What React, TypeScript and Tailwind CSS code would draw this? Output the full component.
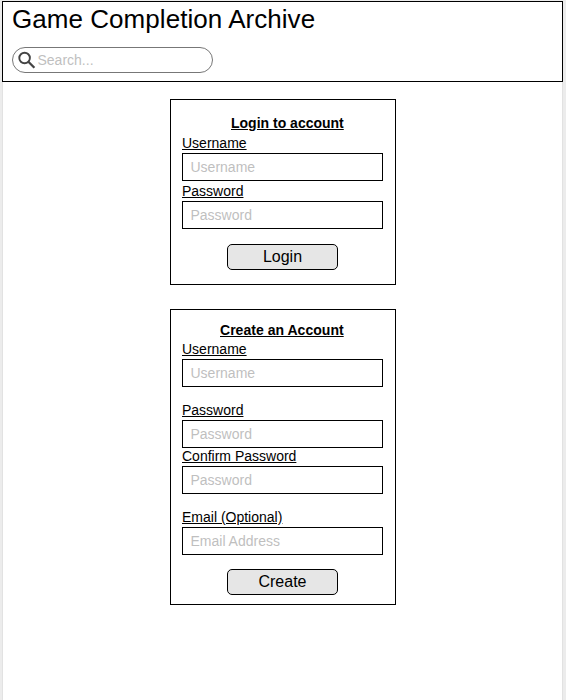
type FieldProps = { label: string; placeholder: string; className?: string };

function Field({ label, placeholder, className = "" }: FieldProps) {
  return (
    <label className={`block ${className}`}>
      <span className="block h-5 text-sm leading-5 underline">{label}</span>
      <input
        placeholder={placeholder}
        className="block h-7 w-[201px] border border-black bg-white px-[7.5px] text-sm outline-none placeholder:text-[#bfbfbf]"
      />
    </label>
  );
}

function SubmitButton({ text, className }: { text: string; className: string }) {
  return (
    <button
      type="button"
      className={`ml-[45px] block h-[26px] w-[111px] rounded-[5px] border border-black bg-[#e6e6e6] text-base leading-6 ${className}`}
    >
      {text}
    </button>
  );
}

export default function App() {
  return (
    <div className="h-[700px] w-[566px] overflow-hidden bg-[#ececec] pl-0.5 pt-px font-['Liberation_Sans',Arial,sans-serif] text-black">
      <div className="h-full w-[561px] border-x border-[#e2e2e2] bg-white">
        <header className="-mx-px h-[81px] border border-black pl-[9px]">
          <h1 className="h-[45px] pt-px text-[26px] leading-8 tracking-[0.05px]">Game Completion Archive</h1>
          <div className="flex h-[26px] w-[201px] items-center rounded-full border border-[#777] bg-white pl-[5px]">
            <svg className="h-[18px] w-[18px] shrink-0" viewBox="0 0 18 18" fill="none" stroke="#444">
              <circle cx="6.6" cy="7" r="5.3" strokeWidth="1.9" />
              <path d="M10.4 10.8L16.4 16.8" strokeWidth="2.3" />
            </svg>
            <input
              placeholder="Search..."
              className="ml-[1.5px] w-[150px] text-sm leading-5 outline-none placeholder:text-[#bfbfbf]"
            />
          </div>
        </header>
        <main className="pl-[167px] pt-[17px]">
          <section className="h-[186px] w-[226px] border border-black pl-[11px] pt-[13px]">
            <h2 className="h-5 pl-[49px] text-sm font-bold leading-5 underline">Login to account</h2>
            <Field label="Username" placeholder="Username" />
            <Field label="Password" placeholder="Password" />
            <SubmitButton text="Login" className="mt-[15px]" />
          </section>
          <section className="mt-6 h-[296px] w-[226px] border border-black pl-[11px] pt-[10px]">
            <h2 className="h-[19px] pl-[38px] text-sm font-bold leading-5 tracking-[0.03px] underline">Create an Account</h2>
            <Field label="Username" placeholder="Username" />
            <Field label="Password" placeholder="Password" className="mt-[13px]" />
            <Field label="Confirm Password" placeholder="Password" className="-mt-0.5" />
            <Field label="Email (Optional)" placeholder="Email Address" className="mt-[13px]" />
            <SubmitButton text="Create" className="mt-[14px]" />
          </section>
        </main>
      </div>
    </div>
  );
}
